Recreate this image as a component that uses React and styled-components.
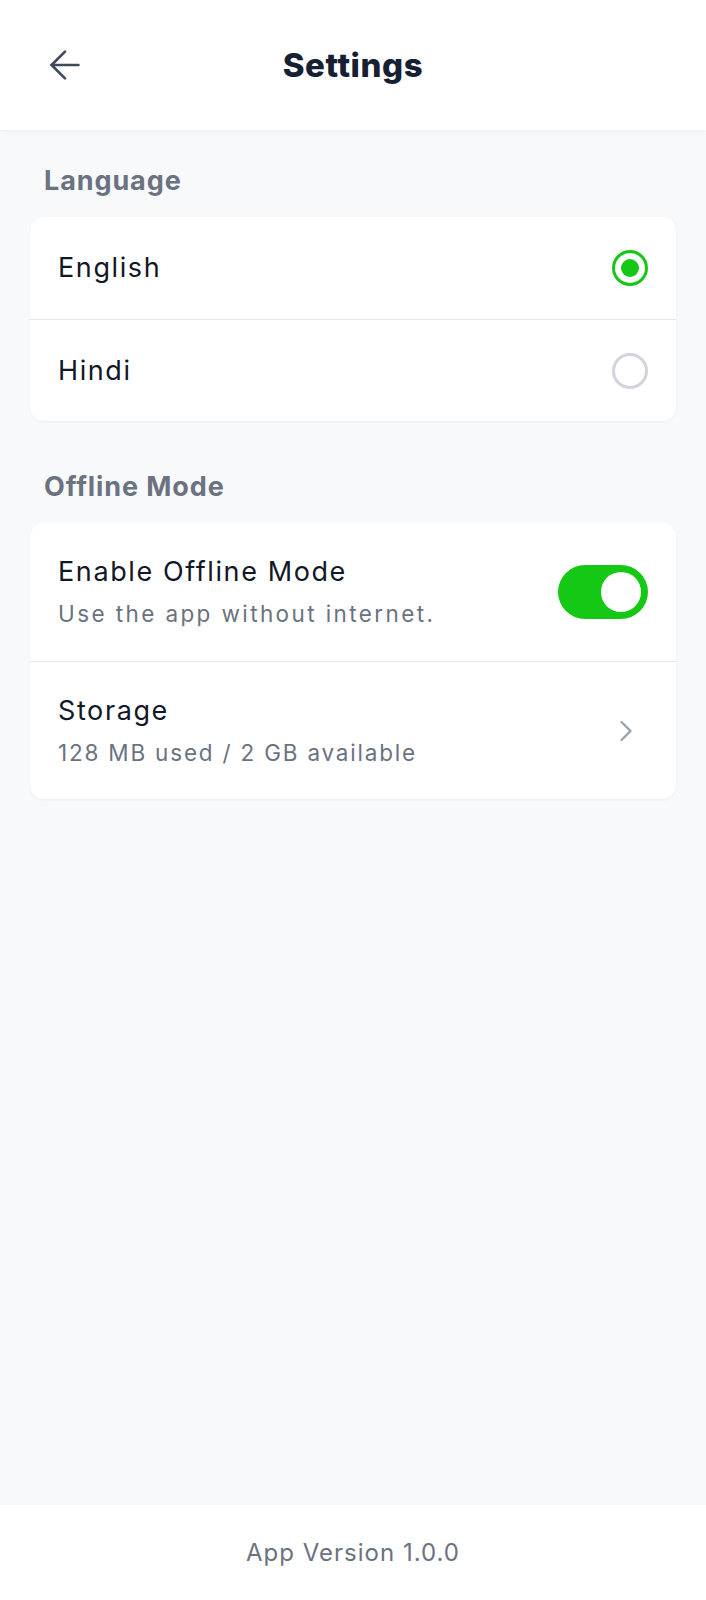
import { useState } from "react";
import styled, { createGlobalStyle } from "styled-components";
import { ArrowLeft, ChevronRight } from "lucide-react";

const GlobalStyle = createGlobalStyle`
    * {
        box-sizing: border-box;
    }

    body {
        margin: 0;
        background-color: #f8f9fb;
        font-family: Inter, "Open Sans", sans-serif;
    }
`;

export default function App() {
    const [language, setLanguage] = useState("English");
    const [offline, setOffline] = useState(true);

    return (
        <Page>
            <GlobalStyle />

            <Header>
                <BackButton aria-label="Back">
                    <ArrowLeft size={46} strokeWidth={1.4} color="#3f4a5c" />
                </BackButton>
                <Title>Settings</Title>
                <span />
            </Header>

            <Content>
                <SectionLabel>Language</SectionLabel>
                <Card>
                    {["English", "Hindi"].map((name) => (
                        <Row key={name} onClick={() => setLanguage(name)}>
                            <RowTitle>{name}</RowTitle>
                            <Radio checked={language === name} />
                        </Row>
                    ))}
                </Card>

                <SectionLabel $spaced>Offline Mode</SectionLabel>
                <Card>
                    <Row $tall>
                        <RowText>
                            <RowTitle>Enable Offline Mode</RowTitle>
                            <RowHint>Use the app without internet.</RowHint>
                        </RowText>
                        <Toggle $on={offline} onClick={() => setOffline(!offline)}>
                            <Knob $on={offline} />
                        </Toggle>
                    </Row>
                    <Row $tall>
                        <RowText>
                            <RowTitle>Storage</RowTitle>
                            <RowHint $tight>128 MB used / 2 GB available</RowHint>
                        </RowText>
                        <ChevronBox>
                            <ChevronRight size={36} strokeWidth={1.6} color="#9ca3af" />
                        </ChevronBox>
                    </Row>
                </Card>
            </Content>

            <Footer>App Version 1.0.0</Footer>
        </Page>
    );
}

const Page = styled.div`
    min-height: 100vh;
    display: flex;
    flex-direction: column;
`;

const Header = styled.header`
    height: 130px;
    background-color: white;
    box-shadow: 0 1px 4px rgba(15, 23, 42, 0.05);

    display: grid;
    grid-template-columns: 1fr auto 1fr;
    align-items: center;
    padding: 0 42px;
    position: relative;
    z-index: 1;
`;

const BackButton = styled.button`
    width: 46px;
    height: 46px;
    padding: 0;
    border: none;
    background: none;
    display: flex;
    align-items: center;
    justify-content: center;
    cursor: pointer;
`;

const Title = styled.h1`
    margin: 0;
    font-size: 33px;
    font-weight: 800;
    letter-spacing: 0.6px;
    color: #172033;
`;

const Content = styled.main`
    flex: 1;
    padding: 33px 30px;
`;

const SectionLabel = styled.h2`
    margin: ${(p) => (p.$spaced ? "48px" : "0")} 0 18px 14px;
    font-size: 27px;
    line-height: 36px;
    font-weight: 700;
    letter-spacing: 0.9px;
    color: #6b7280;
`;

const Card = styled.section`
    background-color: white;
    border-radius: 14px;
    box-shadow: 0 1px 3px rgba(15, 23, 42, 0.05);
    overflow: hidden;
`;

const Row = styled.div`
    min-height: ${(p) => (p.$tall ? "138px" : "102px")};
    padding: 0 28px 0 28px;

    display: flex;
    align-items: center;
    justify-content: space-between;
    cursor: pointer;

    & + & {
        border-top: 1px solid #e5e7eb;
    }
`;

const RowText = styled.div`
    display: flex;
    flex-direction: column;
    gap: 10px;
`;

const RowTitle = styled.span`
    font-size: 27px;
    line-height: 34px;
    letter-spacing: 1.6px;
    color: #111827;
`;

const RowHint = styled.span`
    font-size: 22.5px;
    line-height: 30px;
    letter-spacing: ${(p) => (p.$tight ? "1.8px" : "2.4px")};
    color: #6b7280;
`;

const Radio = styled.span`
    width: 36px;
    height: 36px;
    border-radius: 50%;
    border: 3px solid ${(p) => (p.checked ? "#16c816" : "#d1d5db")};
    display: flex;
    align-items: center;
    justify-content: center;

    &::after {
        content: "";
        width: 18px;
        height: 18px;
        border-radius: 50%;
        background-color: #16c816;
        display: ${(p) => (p.checked ? "block" : "none")};
    }
`;

const Toggle = styled.button`
    width: 90px;
    height: 54px;
    padding: 0 7px;
    border: none;
    border-radius: 27px;
    background-color: ${(p) => (p.$on ? "#16c816" : "#d1d5db")};

    display: flex;
    align-items: center;
    justify-content: ${(p) => (p.$on ? "flex-end" : "flex-start")};
    cursor: pointer;
`;

const Knob = styled.span`
    width: 40px;
    height: 40px;
    border-radius: 50%;
    background-color: white;
`;

const ChevronBox = styled.span`
    display: flex;
    margin-right: 4px;
`;

const Footer = styled.footer`
    height: 95px;
    background-color: white;

    display: flex;
    align-items: center;
    justify-content: center;

    font-size: 24px;
    letter-spacing: 1px;
    color: #6b7280;
`;
